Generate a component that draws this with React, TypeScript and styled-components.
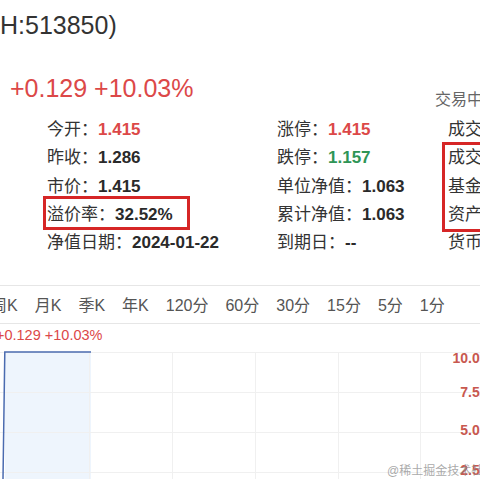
import styled, { createGlobalStyle } from 'styled-components';

const GlobalStyle = createGlobalStyle`
  html, body {
    margin: 0;
    padding: 0;
    background: #fff;
  }
  body {
    font-family: "Liberation Sans", "Noto Sans CJK SC", sans-serif;
  }
`;

type Tone = 'up' | 'down' | 'plain';

const toneColor = (tone?: Tone) =>
  tone === 'up' ? '#dc4848' : tone === 'down' ? '#2f9556' : '#2a2a2a';

const leftCol = [
  { label: '今开', value: '1.415', tone: 'up' as Tone },
  { label: '昨收', value: '1.286' },
  { label: '市价', value: '1.415' },
  { label: '溢价率', value: '32.52%' },
  { label: '净值日期', value: '2024-01-22' },
];

const midCol = [
  { label: '涨停', value: '1.415', tone: 'up' as Tone },
  { label: '跌停', value: '1.157', tone: 'down' as Tone },
  { label: '单位净值', value: '1.063' },
  { label: '累计净值', value: '1.063' },
  { label: '到期日', value: '--' },
];

const rightCol = [
  { label: '成交量', value: '1.02万' },
  { label: '成交额', value: '1.44万' },
  { label: '基金份额', value: '--' },
  { label: '资产净值', value: '--' },
  { label: '货币类型', value: 'CNY' },
];

const tabs = ['周K', '月K', '季K', '年K', '120分', '60分', '30分', '15分', '5分', '1分'];

const Page = styled.div`
  position: relative;
  width: 480px;
  height: 480px;
  overflow: hidden;
  background: #fff;
  color: #333;
`;

const Title = styled.div`
  margin: 7px 0 0 -25px;
  font-size: 25px;
  line-height: 36px;
  color: #333;
  white-space: nowrap;
`;

const QuoteRow = styled.div`
  display: grid;
  grid-template-columns: 425px auto;
  height: 40px;
  margin-top: 27px;
  padding-left: 10px;
`;

const Change = styled.div`
  font-size: 25px;
  line-height: 36px;
  color: #dc4848;
  white-space: nowrap;
`;

const Status = styled.div`
  align-self: end;
  font-size: 16px;
  line-height: 20px;
  color: #666;
  white-space: nowrap;
`;

const Stats = styled.div`
  display: grid;
  grid-template-columns: 230px 171px 200px;
  margin-top: 6px;
  padding-left: 47px;
  font-size: 17px;
`;

const Column = styled.div`
  display: flex;
  flex-direction: column;
`;

const Row = styled.div`
  height: 28.3px;
  line-height: 28.3px;
  white-space: nowrap;
`;

const Label = styled.span`
  color: #333;
`;

const Value = styled.span<{ $tone?: Tone }>`
  font-weight: 700;
  color: ${(p) => toneColor(p.$tone)};
`;

const Highlight = styled.div<{ $top: number; $bottom: number; $left: number; $width: number }>`
  position: relative;

  &::after {
    content: '';
    position: absolute;
    top: ${(p) => p.$top}px;
    bottom: ${(p) => p.$bottom}px;
    left: ${(p) => p.$left}px;
    width: ${(p) => p.$width}px;
    border: 3px solid #d62626;
    box-sizing: border-box;
    pointer-events: none;
  }
`;

const TabBar = styled.div`
  display: flex;
  align-items: center;
  gap: 17px;
  height: 37px;
  margin-top: 27.5px;
  border-top: 1px solid #e6e6e6;
  border-bottom: 1px solid #e6e6e6;
  font-size: 16px;
  color: #555;
  white-space: nowrap;
`;

const Tab = styled.span`
  &:first-child {
    margin-left: -9px;
  }
`;

const SmallChange = styled.div`
  margin: 1px 0 0 -4px;
  font-size: 14.5px;
  line-height: 20px;
  color: #dc4848;
  white-space: nowrap;
`;

const Chart = styled.svg`
  display: block;
`;

const Watermark = styled.div`
  position: absolute;
  left: 387px;
  top: 461px;
  font-size: 12px;
  color: rgba(140, 140, 140, 0.75);
  white-space: nowrap;
`;

type Item = { label: string; value: string; tone?: Tone };

const StatRow = ({ item }: { item: Item }) => (
  <Row>
    <Label>{item.label}：</Label>
    <Value $tone={item.tone}>{item.value}</Value>
  </Row>
);

const gridY = [7, 47, 87, 127];
const gridX = [89, 172, 255, 338, 420];
const axis = [
  { y: 18, text: '10.03%' },
  { y: 52, text: '7.52%' },
  { y: 90, text: '5.01%' },
  { y: 130, text: '2.51%' },
];

const App = () => (
  <Page>
    <GlobalStyle />
    <Title>(SH:513850)</Title>
    <QuoteRow>
      <Change>+0.129 +10.03%</Change>
      <Status>交易中 01-22 15:00</Status>
    </QuoteRow>

    <Stats>
      <Column>
        {leftCol.slice(0, 3).map((it) => (
          <StatRow key={it.label} item={it} />
        ))}
        <Highlight $top={-5} $bottom={-1} $left={-4} $width={147}>
          <StatRow item={leftCol[3]} />
        </Highlight>
        <StatRow item={leftCol[4]} />
      </Column>
      <Column>
        {midCol.map((it) => (
          <StatRow key={it.label} item={it} />
        ))}
      </Column>
      <Column>
        <StatRow item={rightCol[0]} />
        <Highlight $top={-2} $bottom={-3} $left={-6} $width={120}>
          {rightCol.slice(1, 4).map((it) => (
            <StatRow key={it.label} item={it} />
          ))}
        </Highlight>
        <StatRow item={rightCol[4]} />
      </Column>
    </Stats>

    <TabBar>
      {tabs.map((t) => (
        <Tab key={t}>{t}</Tab>
      ))}
    </TabBar>

    <SmallChange>+0.129 +10.03%</SmallChange>

    <Chart width="480" height="134" viewBox="0 0 480 134">
      <rect x="5" y="7" width="86" height="127" fill="#eef5fd" />
      {gridY.map((y) => (
        <line key={y} x1="0" x2="480" y1={y + 0.5} y2={y + 0.5} stroke="#f0f0f0" strokeWidth="1" />
      ))}
      {gridX.map((x) => (
        <line key={x} x1={x + 0.5} x2={x + 0.5} y1="7" y2="134" stroke="#f0f0f0" strokeWidth="1" />
      ))}
      <path d="M3 134 L4.8 7 L91 7" fill="none" stroke="#4a6bb0" strokeWidth="1.5" />
      {axis.map((a) => (
        <text
          key={a.text}
          x="500"
          y={a.y}
          textAnchor="end"
          fontSize="14"
          fontWeight="700"
          fill="#c8584f"
          fontFamily='"Liberation Sans", sans-serif'
        >
          {a.text}
        </text>
      ))}
    </Chart>

    <Watermark>@稀土掘金技术社区</Watermark>
  </Page>
);

export default App;
